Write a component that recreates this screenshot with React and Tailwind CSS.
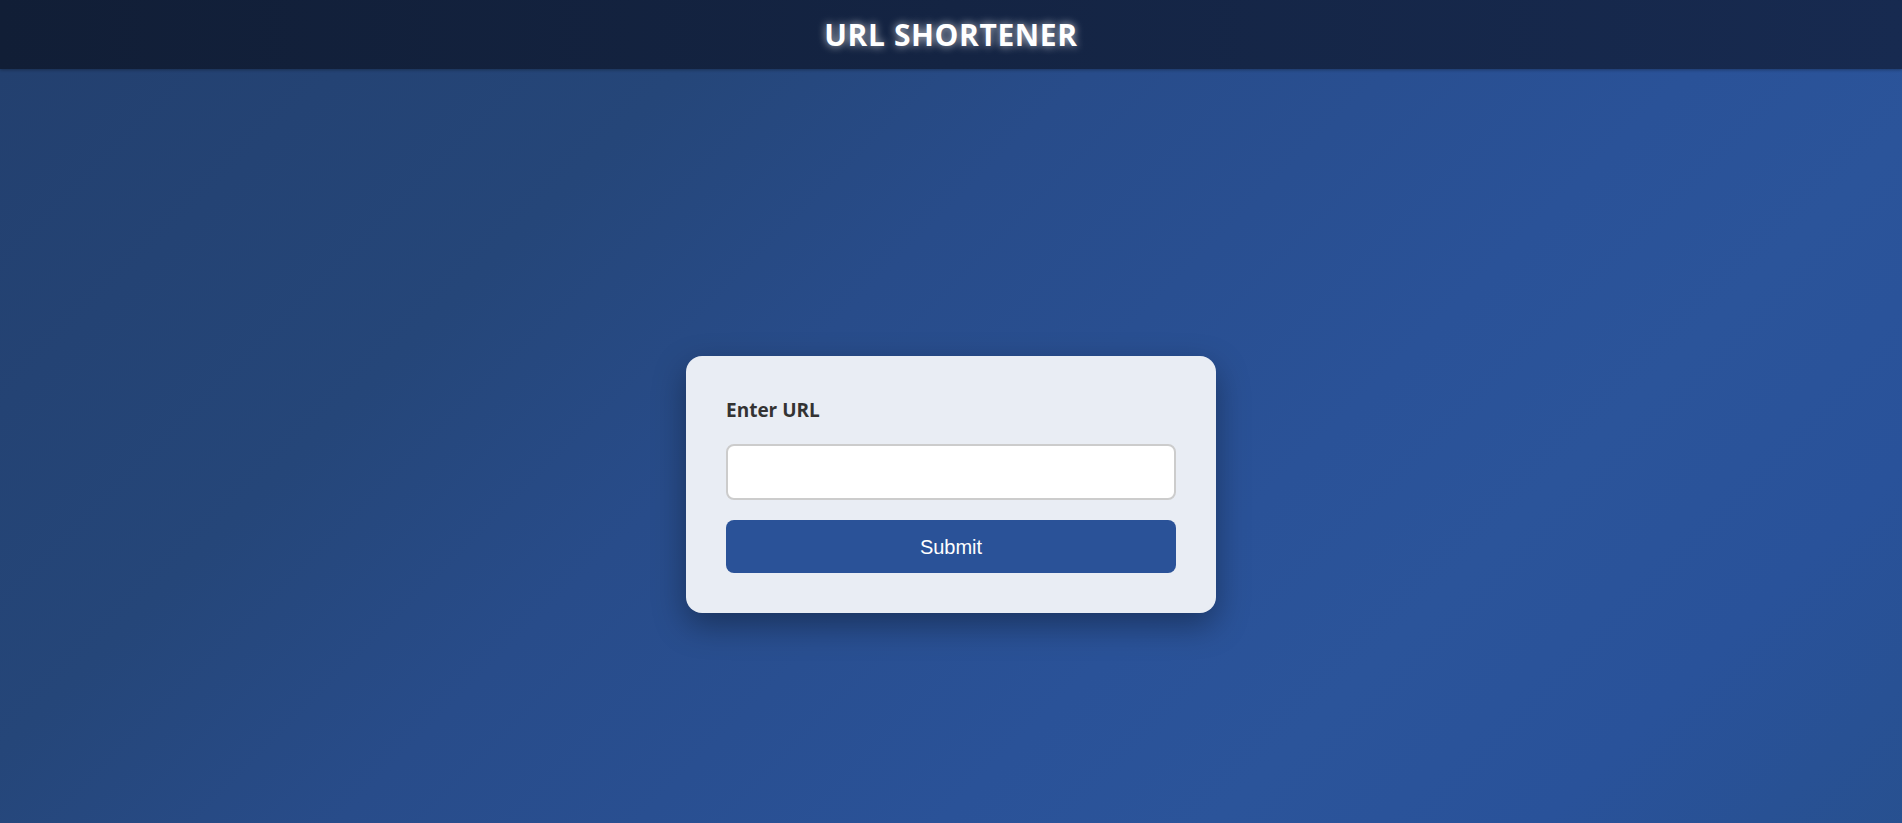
import React, { useState } from "react";

const App = () => {
  const [url, setUrl] = useState("");

  const handleSubmit = (e) => {
    e.preventDefault();
  };

  return (
    <div className="min-h-screen font-['Open_Sans','Noto_Sans',sans-serif]">
      <header className="h-[69px] flex items-center justify-center bg-[linear-gradient(90deg,#111e36,#172a50)] shadow-[0_1px_3px_rgba(0,0,0,0.3)] relative z-10">
        <h1 className="text-[30px] font-bold text-white tracking-[0.6px] [text-shadow:0_0_8px_rgba(255,255,255,0.75)]">
          URL SHORTENER
        </h1>
      </header>

      <main className="h-[831px] flex items-center justify-center bg-[linear-gradient(135deg,#23406f_0%,#254679_25%,#284c8a_40%,#2a5298_62%,#2b549a_72%,#29529a_84%,#27508e_100%)]">
        <form
          onSubmit={handleSubmit}
          className="w-[530px] p-10 rounded-[16px] bg-[#e9edf4] shadow-[0_12px_32px_rgba(0,0,0,0.35)]"
        >
          <label className="block mt-[2px] text-[19px] leading-6 font-bold text-[#333] mb-[22px]">
            Enter URL
          </label>
          <input
            type="text"
            value={url}
            onChange={(e) => setUrl(e.target.value)}
            className="block w-full h-[56px] px-3 bg-white border-2 border-[#cccccc] rounded-lg outline-none text-base"
          />
          <button
            type="submit"
            className="mt-5 w-full h-[53px] rounded-lg bg-[#2a5298] text-white text-[20px] font-['Liberation_Sans',Arial,sans-serif] cursor-pointer"
          >
            Submit
          </button>
        </form>
      </main>
    </div>
  );
};

export default App;
